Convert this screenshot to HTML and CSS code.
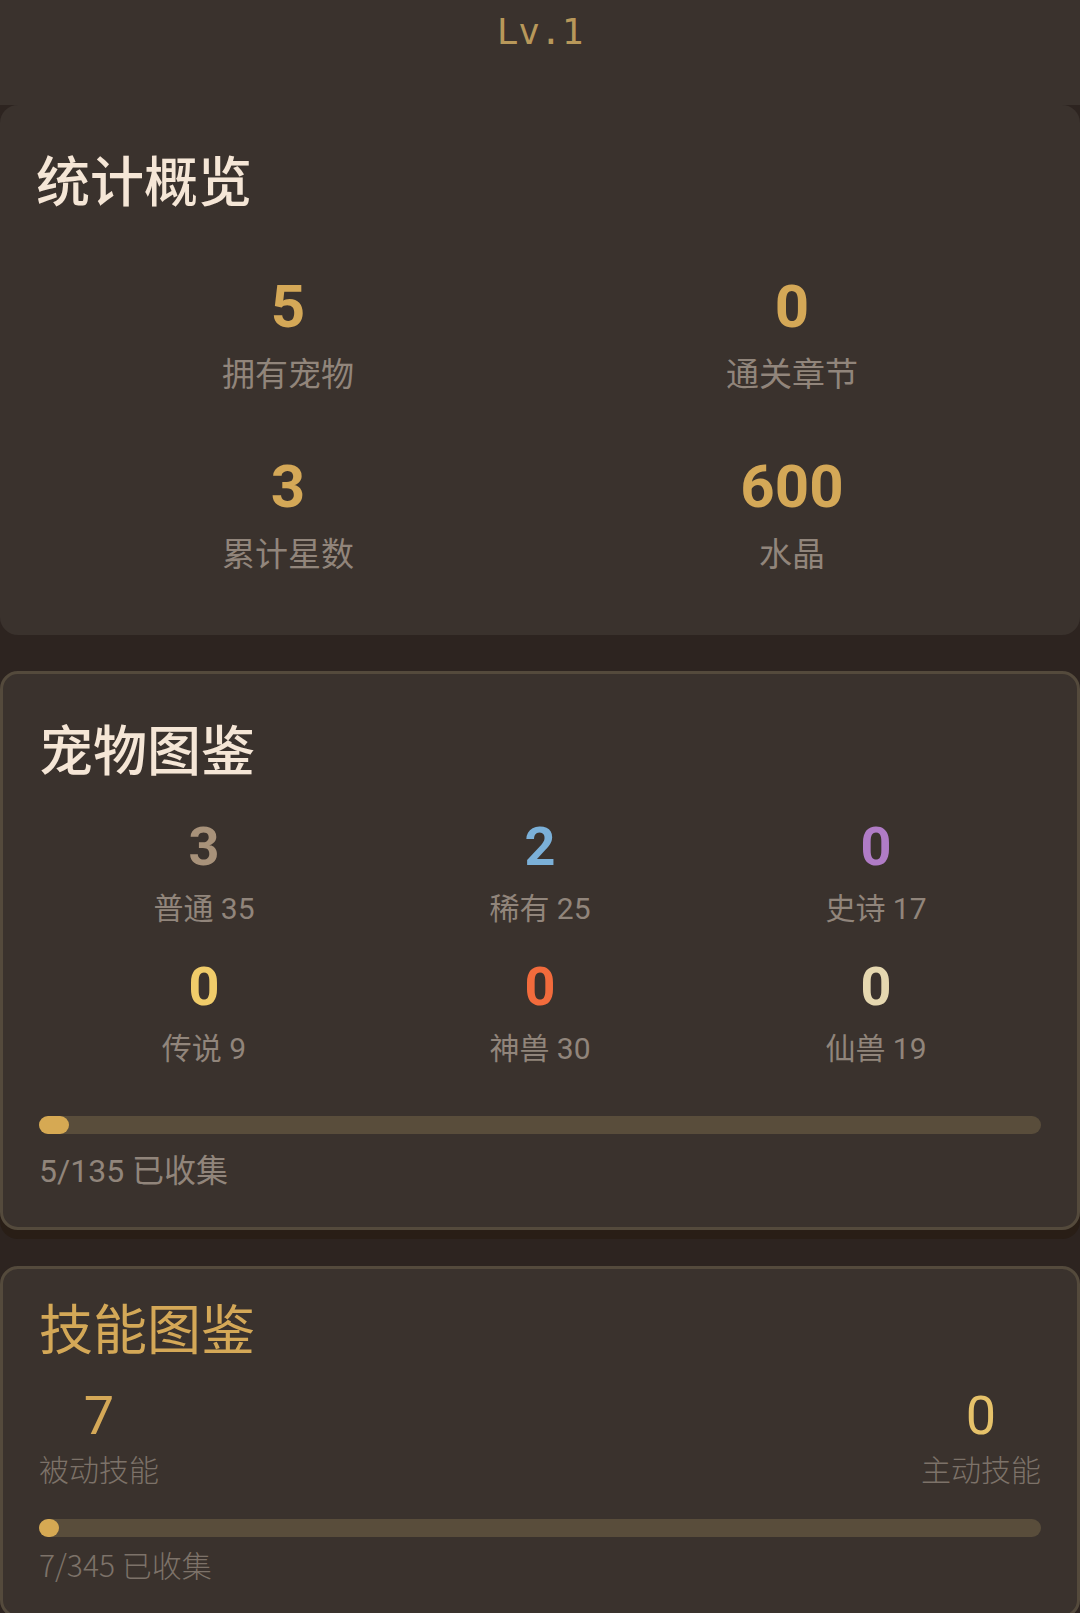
FILE: index.html
```html
<!DOCTYPE html>
<html lang="zh-CN">
  <head>
    <meta charset="utf-8">
    <meta name="viewport" content="width=device-width, initial-scale=1">
    <title>统计概览</title>
    <link rel="stylesheet" href="styles.css">
  </head>
  <body>
    <header class="profile">
      <div class="level">Lv.1</div>
    </header>
    <main class="cards">
      <section class="card overview">
        <h2 class="title">统计概览</h2>
        <div class="stats">
          <div class="stat"><div class="value">5</div><div class="label">拥有宠物</div></div>
          <div class="stat"><div class="value">0</div><div class="label">通关章节</div></div>
          <div class="stat"><div class="value">3</div><div class="label">累计星数</div></div>
          <div class="stat"><div class="value">600</div><div class="label">水晶</div></div>
        </div>
      </section>

      <section class="card framed pets">
        <h2 class="title">宠物图鉴</h2>
        <div class="rarities">
          <div class="rarity common"><div class="count">3</div><div class="name">普通 35</div></div>
          <div class="rarity rare"><div class="count">2</div><div class="name">稀有 25</div></div>
          <div class="rarity epic"><div class="count">0</div><div class="name">史诗 17</div></div>
          <div class="rarity legend"><div class="count">0</div><div class="name">传说 9</div></div>
          <div class="rarity divine"><div class="count">0</div><div class="name">神兽 30</div></div>
          <div class="rarity immortal"><div class="count">0</div><div class="name">仙兽 19</div></div>
        </div>
        <div class="bar" role="progressbar" aria-valuemin="0" aria-valuenow="5" aria-valuemax="135" aria-labelledby="petsCollected">
          <div class="fill" style="width:3%"></div>
        </div>
        <div class="collected" id="petsCollected">5/135 已收集</div>
      </section>

      <section class="card framed skills">
        <h2 class="title">技能图鉴</h2>
        <div class="kinds">
          <div class="kind passive"><div class="count">7</div><div class="name">被动技能</div></div>
          <div class="kind active"><div class="count">0</div><div class="name">主动技能</div></div>
        </div>
        <div class="bar" role="progressbar" aria-valuemin="0" aria-valuenow="7" aria-valuemax="345" aria-labelledby="skillsCollected">
          <div class="fill" style="width:2%"></div>
        </div>
        <div class="collected" id="skillsCollected">7/345 已收集</div>
      </section>
    </main>
  </body>
</html>
```

FILE: styles.css
```css
* {
  box-sizing: border-box;
}

body {
  margin: 0;
  height: 100vh;
  overflow: hidden;
  background: #2d2420;
  color: #91857b;
  font-family: Roboto, "Noto Sans CJK SC", sans-serif;
}

.profile {
  height: 105px;
  padding-top: 8px;
  background: #3a322d;
  text-align: center;
}

.level {
  color: #b8985a;
  font-family: "DejaVu Sans Mono", monospace;
  font-size: 36px;
  line-height: 48px;
}

.cards {
  display: flex;
  flex-direction: column;
  gap: 36px;
}

.card {
  padding: 36px;
  border-radius: 18px;
  background: #3a322d;
}

.framed {
  border: 3px solid #544a3c;
}

.title {
  margin: 0;
  color: #f5e6d6;
  font-size: 54px;
  font-weight: 500;
  line-height: 86px;
}

/* overview */
.overview {
  padding-bottom: 38px;
}

.stats {
  display: grid;
  grid-template-columns: repeat(2, 1fr);
  row-gap: 16px;
  margin-top: 26px;
  text-align: center;
}

.stat {
  padding: 18px 0;
}

.value {
  margin-bottom: 8px;
  color: #d4a857;
  font-size: 60px;
  font-weight: 700;
  line-height: 72px;
}

.label {
  font-size: 33px;
  line-height: 48px;
}

/* pets */
.pets {
  box-shadow: 0 9px 0 #291e16;
}

.rarities {
  display: grid;
  grid-template-columns: repeat(3, 1fr);
  gap: 24px 6px;
  margin: 19px 0 45px;
  text-align: center;
}

.rarity .count {
  margin-bottom: 8px;
  font-size: 54px;
  font-weight: 700;
  line-height: 64px;
}

.rarity .name {
  font-size: 30px;
  line-height: 44px;
}

.common .count { color: #a8927a; }
.rare .count { color: #7bb0d8; }
.epic .count { color: #b07cc6; }
.legend .count { color: #f0cc6a; }
.divine .count { color: #f26b3c; }
.immortal .count { color: #e6d8b0; }

.bar {
  height: 18px;
  border-radius: 9px;
  background: #594d3b;
}

.fill {
  height: 100%;
  border-radius: 9px;
  background: #d6a953;
}

.collected {
  margin-top: 18px;
  font-size: 32px;
  line-height: 39px;
}

/* skills */
.skills {
  color: #7d7269;
}

.skills .title {
  color: #d4a857;
  font-weight: 400;
  line-height: 54px;
}

.kinds {
  display: flex;
  justify-content: space-between;
  margin: 27px 0 30px;
  text-align: center;
}

.kind .count {
  margin-bottom: 7px;
  color: #d4a857;
  font-size: 54px;
  line-height: 60px;
}

.active .count {
  color: #e6c26a;
}

.kind .name {
  font-size: 30px;
  font-weight: 300;
  line-height: 36px;
}

.skills .collected {
  margin-top: 12px;
  font-family: "Noto Sans CJK SC", sans-serif;
  font-size: 30px;
  font-weight: 300;
  line-height: 30px;
}
```
